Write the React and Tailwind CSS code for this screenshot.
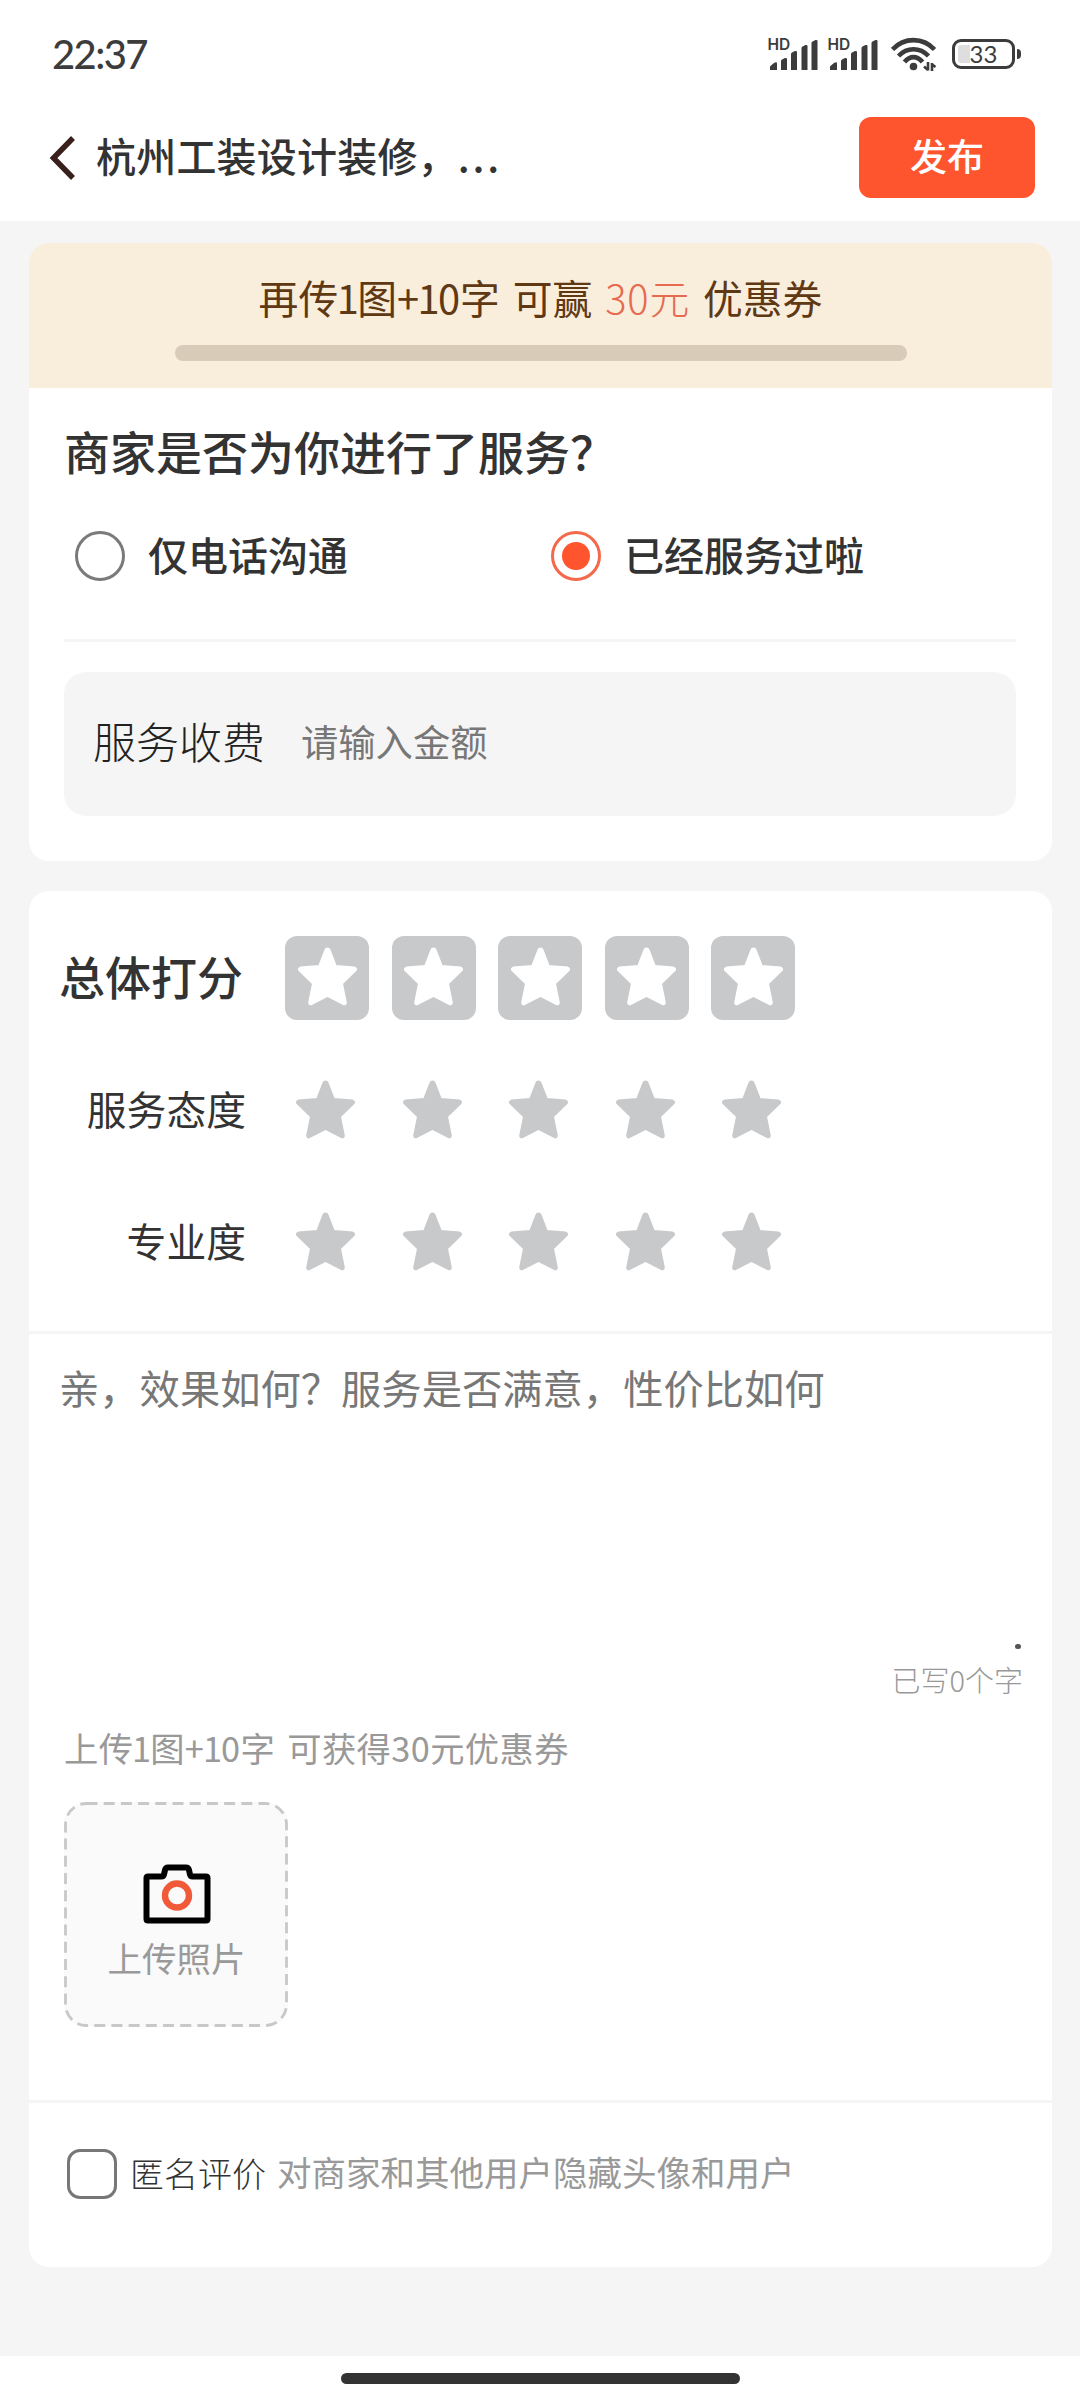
import React, { useState } from 'react'

const STAR_PATH = "M30.5 2.4 Q32 2.4 32.600 4 L38.8 20 L57.5 21.600 Q60 22.600 58.600 24.4 L45 37.6 L48.8 56.4 Q48.800 58.800 46.600 58.2 L30.5 49.8 L14.4 58.2 Q12.200 58.800 12.2 56.4 L16 37.6 L2.4 24.4 Q1 22.600 3.5 21.600 L22.2 20 L28.400 4 Q29 2.4 30.5 2.4 Z";

function Star({ className }) {
  return (
    <svg viewBox="0 0 61 61" className={"w-[61px] h-[61px] " + className}>
      <path d={STAR_PATH} fill="currentColor" stroke="currentColor" strokeWidth="2" strokeLinejoin="round" />
    </svg>
  )
}

function Signal() {
  return (
    <svg width="52" height="34" viewBox="0 0 52 34" className="text-[#3c3c3c] overflow-visible">
      <text x="-0.5" y="13.2" fontSize="15.5" fontWeight="600" fill="currentColor" fontFamily="Inter, sans-serif">HD</text>
      <path fill="currentColor" d="M2 33v-3q0-1 1-1.500l3-2.500q3-1.500 3 .500v6.500zM13 33v-9q0-1 1-1.500l3-1.500q2-.500 2 1v11zM23 33v-16q0-1 1-1.500l3-1.500q2-.500 2 1v18zM33.500 33v-22q0-1 1-1.500l3-1.500q2-.500 2 1v24zM43.500 33v-27q0-1 1-1.500l3-1.500q2-.500 2 1v29z" />
    </svg>
  )
}

function Wifi() {
  return (
    <svg width="46" height="34" viewBox="0 0 46 34" fill="none" stroke="#3c3c3c" strokeWidth="4.600">
      <path d="M1.500 12.500C13 0 32 0 43.500 12.500" />
      <path d="M7.500 19C16 10 29 10 37.500 19" />
      <path d="M13.500 25C19 18.500 26 18.500 31.500 25" />
      <circle cx="22.500" cy="29.500" r="3.800" fill="#3c3c3c" stroke="none" />
      <path strokeWidth="2.600" d="M37 25v8.500M33 29.500l4 3.500M41 34v-8M40.500 27l4 3" />
    </svg>
  )
}

function Battery() {
  return (
    <div className="flex items-center gap-[2px]">
      <div className="w-[63px] h-[30px] rounded-[9px] border-[3px] border-[#3c3c3c] p-[3px]">
        <div className="h-full flex items-center justify-center bg-linear-to-r from-[#dedede] from-24% to-transparent to-24% rounded-[3px]">
          <span className="text-[24px] leading-none text-[#3c3c3c] font-['Lato',sans-serif]">33</span>
        </div>
      </div>
      <div className="w-1 h-[10px] rounded-r-sm bg-[#3c3c3c]"></div>
    </div>
  )
}

function StatusBar() {
  return (
    <div className="h-[98px] pt-[37px] pl-[52px] pr-[59px] flex items-start justify-between">
      <div className="text-[40px] leading-[35px] tracking-[-1.6px] font-medium text-[#3c3c3c] font-['Lato',sans-serif]">22:37</div>
      <div className="flex items-center">
        <Signal />
        <div className="ml-2"><Signal /></div>
        <div className="ml-[11px]"><Wifi /></div>
        <div className="ml-[15px]"><Battery /></div>
      </div>
    </div>
  )
}

// the digit 1 sits tight between its neighbours
function One() {
  return <span className="mx-[-0.04em]">1</span>
}

function Radio({ checked, label, onSelect }) {
  return (
    <button type="button" className="flex items-center" onClick={onSelect}>
      <span className={checked
        ? "w-[50px] h-[50px] rounded-full border-[3px] border-[#f4694a] flex items-center justify-center"
        : "w-[50px] h-[50px] rounded-full border-[3px] border-[#7a7a7a] flex items-center justify-center"}>
        {checked && <span className="w-7 h-7 rounded-full bg-[#ff552e]"></span>}
      </span>
      <span className="ml-[23px] pb-1 text-[40px] leading-[46px] font-medium text-[#333]">{label}</span>
    </button>
  )
}

function RateRow({ label, value, onRate }) {
  return (
    <div className="flex items-center h-[132px]">
      <div className="w-[217px] pb-[3px] text-right text-[39.800px] text-[#333]">{label}</div>
      <div className="ml-[49px] flex gap-[45.600px]">
        {[1, 2, 3, 4, 5].map((n) => (
          <button key={n} type="button" className="block" onClick={() => onRate(n)}>
            <Star className={n <= value ? "text-[#ff552e]" : "text-[#c8c9cb]"} />
          </button>
        ))}
      </div>
    </div>
  )
}

export default function App() {

  const [served, setServed] = useState(true);
  const [overall, setOverall] = useState(0);
  const [attitude, setAttitude] = useState(0);
  const [skill, setSkill] = useState(0);
  const [content, setContent] = useState("");
  const [anonymous, setAnonymous] = useState(false);

  return (
    <div className="w-[1080px] h-[2400px] flex flex-col bg-[#f5f5f5] overflow-hidden whitespace-nowrap font-['Noto_Sans_CJK_SC',sans-serif]">

      {/* status bar and title */}
      <header className="h-[221px] bg-white shrink-0">
        <StatusBar />
        <div className="flex items-center h-[119px] pl-[49px] pr-[45px]">
          <svg width="28" height="46" viewBox="0 0 28 46" fill="none" stroke="#3a201c" strokeWidth="5.500">
            <path d="M24 3L4.500 23L24 43" />
          </svg>
          <h1 className="ml-[19px] pb-[6px] text-[40px] leading-[56px] tracking-[0.2px] text-[#333] font-medium">
            杭州工装设计装修，<span className="tracking-[2.800px]">...</span>
          </h1>
          <button type="button" className="ml-auto w-[176px] h-[81px] pb-[3px] rounded-xl bg-[#ff552e] text-white text-[37px] font-medium">发布</button>
        </div>
      </header>

      <main className="pl-[29px] pr-7 pt-[22px] h-[2135px] shrink-0">

        <section className="h-[618px] rounded-[20px] bg-white overflow-hidden">
          {/* coupon progress */}
          <div className="h-[145px] bg-[#f9eddb] flex flex-col items-center">
            <div className="mt-[24px] text-[39.800px] leading-[60px] [word-spacing:4px] text-[#5f3814]">
              再传<One />图+<One />0字 可赢 <span className="font-light tracking-[0.8px] text-[#e56a50]">30元</span> 优惠券
            </div>
            <div className="mt-[18px] w-[732px] h-4 rounded-lg bg-[#d8ccb9]"></div>
          </div>

          <div className="pl-[35px] pr-9">
            <h2 className="pt-[28px] text-[46px] leading-[68px] font-medium text-[#333]">商家是否为你进行了服务？</h2>
            <div className="mt-[47px] pl-[11px] flex">
              <div className="w-[476px]">
                <Radio checked={!served} label="仅电话沟通" onSelect={() => setServed(false)} />
              </div>
              <Radio checked={served} label="已经服务过啦" onSelect={() => setServed(true)} />
            </div>
            <div className="mt-[58px] h-[3px] bg-[#f5f5f5]"></div>
            <label className="mt-[30px] h-36 rounded-[22px] bg-[#f5f5f5] flex items-center px-[29px]">
              <span className="pb-[7px] text-[43px] font-light text-[#222]">服务收费</span>
              <input className="ml-9 pb-1 flex-1 text-[37.300px] outline-none placeholder:text-[#777]" placeholder="请输入金额" />
            </label>
          </div>
        </section>

        <section className="mt-[30px] h-[1376px] rounded-[20px] bg-white">
          {/* scores */}
          <div className="h-[443px] border-b-[3px] border-[#f5f5f5] pt-[45px]">
            <div className="flex items-center h-[84px] pl-[30px]">
              <div className="w-[226px] pb-[6px] text-[46px] font-medium text-[#333]">总体打分</div>
              <div className="flex gap-[22.600px]">
                {[1, 2, 3, 4, 5].map((n) => (
                  <button
                    key={n}
                    type="button"
                    onClick={() => setOverall(n)}
                    className={n <= overall
                      ? "w-[84px] h-[84px] pb-[3px] rounded-xl flex items-center justify-center bg-[#ff552e]"
                      : "w-[84px] h-[84px] pb-[3px] rounded-xl flex items-center justify-center bg-[#c8c9cb]"}>
                    <Star className="text-white" />
                  </button>
                ))}
              </div>
            </div>
            <div className="mt-[23px]">
              <RateRow label="服务态度" value={attitude} onRate={setAttitude} />
              <RateRow label="专业度" value={skill} onRate={setSkill} />
            </div>
          </div>

          {/* comment */}
          <textarea
            className="block w-full h-[310px] pt-[23px] px-[30px] resize-none outline-none text-[40.300px] leading-[60px] placeholder:text-[#777]"
            placeholder="亲，效果如何？服务是否满意，性价比如何"
            value={content}
            onChange={(e) => setContent(e.target.value)} />
          <div className="h-[6px] pr-[31px] flex justify-end">
            <div className="w-[6px] h-[5px] rounded-full bg-[#555]"></div>
          </div>
          <div className="pr-[29px] mt-[9px] text-right text-[29px] leading-[40px] font-light text-[#999]">已写{content.length}个字</div>

          {/* photo upload */}
          <div className="pl-[35px]">
            <div className="mt-[23px] text-[34.300px] leading-[50px] [word-spacing:4px] tracking-[0.4px] text-[#999]">上传<One />图+<One />0字 可获得30元优惠券</div>
            <button type="button" className="relative mt-[30px] w-[224px] h-[225px] flex flex-col items-center rounded-[22px] bg-[#fafafa]">
              <svg className="absolute inset-0" width="224" height="225" fill="none">
                <rect x="1.500" y="1.500" width="221" height="222" rx="21" stroke="#c8c8c8" strokeWidth="2.800" strokeDasharray="11 6.200" />
              </svg>
              <svg className="mt-[62px] ml-[2px]" width="68" height="60" viewBox="0 0 68 60" fill="none">
                <path d="M5 12.500H18.500Q20.500 12.500 21 10.500L22 6Q22.600 3.500 25 3.500H43Q45.400 3.500 46 6L47 10.500Q47.500 12.500 49.500 12.500H63Q64.500 12.500 64.500 14V55Q64.500 56.500 63 56.500H5Q3.500 56.500 3.500 55V14Q3.500 12.500 5 12.500Z" stroke="#000" strokeWidth="6" />
                <circle cx="34" cy="31.500" r="12" stroke="#f15a38" strokeWidth="6.400" />
              </svg>
              <span className="mt-[8px] ml-[1px] text-[34.500px] leading-[50px] text-[#999]">上传照片</span>
            </button>
          </div>

          {/* anonymous */}
          <div className="mt-[73px] h-[144px] border-t-[3px] border-[#f5f5f5] flex items-center pl-[38px]">
            <button
              type="button"
              onClick={() => setAnonymous(!anonymous)}
              className={anonymous
                ? "w-[50px] h-[50px] rounded-[13px] border-[3px] border-[#ff552e] bg-[#ff552e]"
                : "w-[50px] h-[50px] rounded-[13px] border-[3px] border-[#777] bg-white"}></button>
            <span className="ml-[13px] pb-[3px] text-[34px] font-light text-[#333]">匿名评价</span>
            <span className="ml-[11px] pb-[3px] text-[34.500px] text-[#999]">对商家和其他用户隐藏头像和用户</span>
          </div>
        </section>
      </main>

      <footer className="flex-1 bg-white flex justify-center pt-[17px]">
        <div className="w-[399px] h-[11px] rounded-full bg-[#333]"></div>
      </footer>
    </div>
  )
}
